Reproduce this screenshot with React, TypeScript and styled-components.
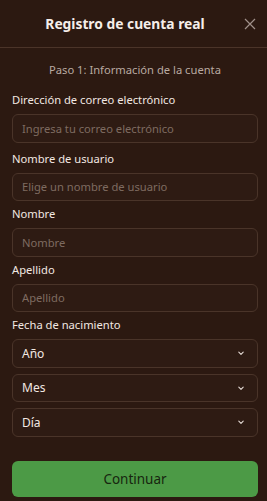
import React from "react";
import styled, { createGlobalStyle } from "styled-components";

const Global = createGlobalStyle`
  html, body { margin: 0; padding: 0; background: #2c1911; }
  body { font-family: "Noto Sans", "Open Sans", sans-serif; }
  * { box-sizing: border-box; }
`;

const Page = styled.div`
  width: 267px;
  height: 501px;
  background: #2c1911;
  display: flex;
  flex-direction: column;
  overflow: hidden;
`;

const Header = styled.header`
  height: 48px;
  flex-shrink: 0;
  display: flex;
  align-items: center;
  padding: 0 5px 0 12px;
  border-bottom: 1px solid #4b3429;
`;

const Title = styled.h1`
  flex: 1;
  margin: 0;
  text-align: center;
  font-size: 13.8px;
  font-weight: 700;
  color: #f6eee9;
`;

const Close = styled.button`
  width: 24px;
  height: 24px;
  padding: 0;
  border: none;
  background: transparent;
  display: flex;
  align-items: center;
  justify-content: center;
`;

const Body = styled.div`
  flex: 1;
  display: flex;
  flex-direction: column;
  padding: 14px 9px 4px 12px;
`;

const Step = styled.p`
  margin: 0 0 14px;
  text-align: center;
  font-size: 11.2px;
  line-height: 16px;
  color: #b9aaa1;
`;

const Fields = styled.div`
  display: flex;
  flex-direction: column;
  gap: 5px;
`;

const Field = styled.div<{ $extra?: boolean }>`
  display: flex;
  flex-direction: column;
  gap: 6px;
  margin-bottom: ${(p) => (p.$extra ? "3px" : "0")};
`;

const Label = styled.label`
  font-size: 11.2px;
  line-height: 16px;
  color: #f2e8e2;
`;

const Input = styled.input`
  height: 28.5px;
  width: 100%;
  border: 1px solid #4a3429;
  border-radius: 6px;
  background: #2e1b13;
  padding: 0 9px;
  font-family: inherit;
  font-size: 11.2px;
  color: #f2e8e2;
  outline: none;
  &::placeholder { color: #7e6b61; }
`;

const Selects = styled.div`
  display: flex;
  flex-direction: column;
  gap: 6px;
`;

const SelectBox = styled.div`
  height: 28.5px;
  border: 1px solid #4a3429;
  border-radius: 6px;
  background: #2e1b13;
  padding: 0 11px 0 9px;
  display: flex;
  align-items: center;
  justify-content: space-between;
  font-size: 12px;
  color: #f2e8e2;
`;

const Button = styled.button`
  margin-top: auto;
  height: 36px;
  width: 100%;
  border: none;
  border-radius: 6px;
  background: #4c9a46;
  color: #17260f;
  font-family: inherit;
  font-size: 13.5px;
`;

const Chevron = () => (
  <svg width="10" height="10" viewBox="0 0 10 10" fill="none">
    <path d="M2.8 4.2 L5 6.3 L7.2 4.2" stroke="#e6dcd6" strokeWidth="1.1" strokeLinecap="round" strokeLinejoin="round" />
  </svg>
);

const Select = ({ label }: { label: string }) => (
  <SelectBox>
    <span>{label}</span>
    <Chevron />
  </SelectBox>
);

export default function App() {
  return (
    <Page>
      <Global />
      <Header>
        <Title>Registro de cuenta real</Title>
        <Close aria-label="Cerrar">
          <svg width="12" height="12" viewBox="0 0 12 12">
            <path d="M1 1 L11 11 M11 1 L1 11" stroke="#a0908a" strokeWidth="1.2" />
          </svg>
        </Close>
      </Header>
      <Body>
        <Step>Paso 1: Información de la cuenta</Step>
        <Fields>
          <Field $extra>
            <Label>Dirección de correo electrónico</Label>
            <Input placeholder="Ingresa tu correo electrónico" />
          </Field>
          <Field>
            <Label>Nombre de usuario</Label>
            <Input placeholder="Elige un nombre de usuario" />
          </Field>
          <Field>
            <Label>Nombre</Label>
            <Input placeholder="Nombre" />
          </Field>
          <Field>
            <Label>Apellido</Label>
            <Input placeholder="Apellido" />
          </Field>
          <Field>
            <Label>Fecha de nacimiento</Label>
            <Selects>
              <Select label="Año" />
              <Select label="Mes" />
              <Select label="Día" />
            </Selects>
          </Field>
        </Fields>
        <Button>Continuar</Button>
      </Body>
    </Page>
  );
}
